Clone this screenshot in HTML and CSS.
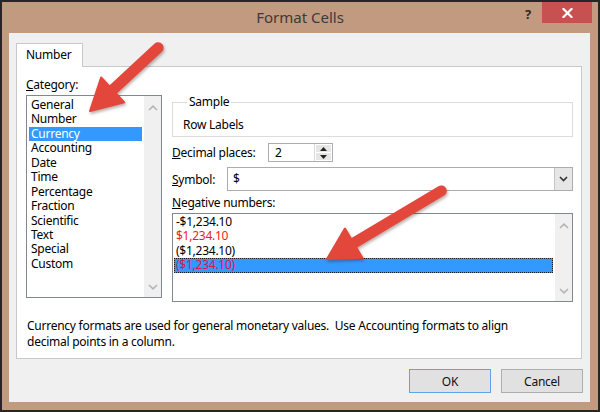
FILE: index.html
```html
<!DOCTYPE html>
<html>
<head>
<meta charset="utf-8">
<title>Format Cells</title>
<link rel="stylesheet" href="styles.css">
</head>
<body>
<div class="window">
  <div class="titlebar">
    <div class="tb-side"></div>
    <div class="title">Format Cells</div>
    <div class="tb-side tb-right">
      <div class="help">?</div>
      <div class="close">
        <svg width="11" height="10" viewBox="0 0 11 10"><path d="M1.5 1 L9.5 9 M9.5 1 L1.5 9" stroke="#fff" stroke-width="2.2" stroke-linecap="square"/></svg>
      </div>
    </div>
  </div>
  <div class="client">
    <div class="tabs"><div class="tab">Number</div></div>
    <div class="panel">
      <div class="cols">
        <div class="left">
          <div class="lbl"><u>C</u>ategory:</div>
          <div class="listbox catlist">
            <ul class="items">
              <li>General</li>
              <li>Number</li>
              <li class="sel">Currency</li>
              <li>Accounting</li>
              <li>Date</li>
              <li>Time</li>
              <li>Percentage</li>
              <li>Fraction</li>
              <li>Scientific</li>
              <li>Text</li>
              <li>Special</li>
              <li>Custom</li>
            </ul>
            <div class="vscroll">
              <svg width="10" height="6" viewBox="0 0 10 6"><path d="M1 5 L5 1.2 L9 5" fill="none" stroke="#b4b4b4" stroke-width="1.6"/></svg>
              <svg width="10" height="6" viewBox="0 0 10 6"><path d="M1 1 L5 4.8 L9 1" fill="none" stroke="#b4b4b4" stroke-width="1.6"/></svg>
            </div>
          </div>
        </div>
        <div class="right">
          <fieldset class="sample">
            <legend>Sample</legend>
            <div class="sample-val">Row Labels</div>
          </fieldset>
          <div class="row dec-row">
            <div class="row-lbl dec-lbl"><u>D</u>ecimal places:</div>
            <div class="spin">
              <div class="spin-val">2</div>
              <div class="spin-btns">
                <div class="spin-btn"><svg width="7" height="4" viewBox="0 0 7 4"><path d="M0 4 L3.5 0 L7 4 Z" fill="#222"/></svg></div>
                <div class="spin-btn"><svg width="7" height="4" viewBox="0 0 7 4"><path d="M0 0 L3.5 4 L7 0 Z" fill="#222"/></svg></div>
              </div>
            </div>
          </div>
          <div class="row sym-row">
            <div class="row-lbl sym-lbl"><u>S</u>ymbol:</div>
            <div class="select">
              <div class="select-val">$</div>
              <div class="select-btn"><svg width="9" height="6" viewBox="0 0 9 6"><path d="M1 1 L4.5 4.6 L8 1" fill="none" stroke="#333" stroke-width="1.6"/></svg></div>
            </div>
          </div>
          <div class="lbl neg-lbl"><u>N</u>egative numbers:</div>
          <div class="listbox neglist">
            <ul class="items neg-items">
              <li>-$1,234.10</li>
              <li class="red">$1,234.10</li>
              <li>($1,234.10)</li>
              <li class="red sel focus">($1,234.10)</li>
            </ul>
            <div class="vscroll">
              <svg width="10" height="6" viewBox="0 0 10 6"><path d="M1 5 L5 1.2 L9 5" fill="none" stroke="#b4b4b4" stroke-width="1.6"/></svg>
              <svg width="10" height="6" viewBox="0 0 10 6"><path d="M1 1 L5 4.8 L9 1" fill="none" stroke="#b4b4b4" stroke-width="1.6"/></svg>
            </div>
          </div>
        </div>
      </div>
      <p class="desc">Currency formats are used for general monetary values.&nbsp; Use Accounting formats to align<br>decimal points in a column.</p>
    </div>
    <div class="buttons">
      <button class="btn ok">OK</button>
      <button class="btn">Cancel</button>
    </div>
  </div>
  <svg class="arrows" width="600" height="412" viewBox="0 0 600 412">
    <g transform="translate(90,111) rotate(137.1)">
      <line x1="-26" y1="0" x2="-93" y2="0" stroke="#e3473b" stroke-width="11" stroke-linecap="round"/>
      <path d="M0 0 L-31 -17 L-31 17 Z" fill="#e3473b" stroke="#e3473b" stroke-width="2" stroke-linejoin="round"/>
    </g>
    <g transform="translate(327,259) rotate(149.2)">
      <line x1="-26" y1="0" x2="-133" y2="0" stroke="#e3473b" stroke-width="11" stroke-linecap="round"/>
      <path d="M0 0 L-31 -17 L-31 17 Z" fill="#e3473b" stroke="#e3473b" stroke-width="2" stroke-linejoin="round"/>
    </g>
  </svg>
</div>
</body>
</html>
```

FILE: styles.css
```css
* { box-sizing: border-box; }

body {
  margin: 0;
  font-family: "Noto Sans", "Open Sans", sans-serif;
  font-size: 12px;
  letter-spacing: -0.25px;
  color: #000;
}

.window {
  position: relative;
  width: 600px;
  height: 412px;
  background: #c29a7f;
  border: 2px solid #262626;
  display: flex;
  flex-direction: column;
}

.titlebar {
  height: 31px;
  display: flex;
  flex-shrink: 0;
}

.tb-side {
  flex: 1;
  display: flex;
}

.tb-right {
  justify-content: flex-end;
  align-items: flex-start;
}

.title {
  font-size: 15px;
  letter-spacing: 0;
  color: #3b3b3b;
  line-height: 31px;
}

.help {
  font-weight: bold;
  font-size: 13px;
  color: #2b2b2b;
  line-height: 16px;
  margin-top: 4px;
  margin-right: 11px;
}

.close {
  width: 50px;
  height: 21px;
  background: #c75050;
  margin-right: 6px;
  display: flex;
  align-items: center;
  justify-content: center;
}

.client {
  flex: 1;
  margin: 0 8px 8px 7px;
  background: #f0f0f0;
  display: flex;
  flex-direction: column;
}

.tabs {
  padding: 10px 0 0 7px;
  display: flex;
}

.tab {
  position: relative;
  z-index: 1;
  height: 24px;
  width: 67px;
  border: 1px solid #c9c9c9;
  border-bottom: none;
  background: #fff;
  padding-left: 9px;
  line-height: 22px;
  margin-bottom: -1px;
}

.panel {
  height: 293px;
  margin: 0 8px 0 7px;
  border: 1px solid #c9c9c9;
  background: #fff;
  padding: 10px 8px 0 9px;
}

.cols {
  display: flex;
  gap: 10px;
}

.left {
  width: 136px;
  display: flex;
  flex-direction: column;
}

.right {
  flex: 1;
  display: flex;
  flex-direction: column;
}

.lbl {
  line-height: 16px;
}

.listbox {
  border: 1px solid #828790;
  display: flex;
  background: #fff;
}

.catlist {
  margin-top: 2px;
  height: 203px;
}

.items {
  flex: 1;
  list-style: none;
  margin: 0;
  padding: 2px 2px 0 2px;
}

.items li {
  line-height: 14.45px;
  height: 14.45px;
  padding-left: 2px;
  white-space: nowrap;
}

.items li.sel {
  background: #3399ff;
  color: #fff;
}

.neg-items {
  padding: 1px 2px 0 1px;
}

.neg-items li {
  padding-left: 2px;
}

.items li.red {
  color: #ee1c24;
}

.items li.sel.red {
  color: #d9184f;
}

.items li.focus {
  outline: 1px dotted #1a1a1a;
  outline-offset: -1px;
}

.vscroll {
  width: 17px;
  background: #f0f0f0;
  display: flex;
  flex-direction: column;
  justify-content: space-between;
  align-items: center;
  padding: 9px 0 7px;
}

.sample {
  margin: 17px 0 0;
  border: 1px solid #dcdcdc;
  padding: 7px 10px 3px;
  min-width: 0;
}

.sample legend {
  padding: 0 2px;
  margin-left: 4px;
  line-height: 16px;
}

.sample-val {
  line-height: 16px;
}

.row {
  display: flex;
  align-items: center;
}

.dec-row {
  margin-top: 6px;
}

.dec-lbl {
  width: 96px;
}

.spin {
  width: 65px;
  height: 19px;
  border: 1px solid #abadb3;
  display: flex;
  background: #fff;
}

.spin-val {
  flex: 1;
  padding-left: 6px;
  line-height: 17px;
}

.spin-btns {
  width: 18px;
  display: flex;
  flex-direction: column;
  gap: 1px;
  padding: 1px;
  background: #fff;
  border-left: 1px solid #dadada;
}

.spin-btn {
  flex: 1;
  background: #e6e6e6;
  display: flex;
  align-items: center;
  justify-content: center;
}

.sym-row {
  margin-top: 5px;
}

.sym-lbl {
  width: 55px;
}

.select {
  flex: 1;
  height: 24px;
  border: 1px solid #acacac;
  display: flex;
  background: #fff;
}

.select-val {
  flex: 1;
  padding-left: 5px;
  line-height: 22px;
}

.select-btn {
  width: 18px;
  background: #e6e6e6;
  border-left: 1px solid #c4c4c4;
  display: flex;
  align-items: center;
  justify-content: center;
}

.neg-lbl {
  margin-top: 4px;
}

.neglist {
  margin-top: 2px;
  height: 89px;
}

.desc {
  margin: 16px 0 0 1px;
  line-height: 16px;
}

.buttons {
  display: flex;
  justify-content: flex-end;
  gap: 10px;
  padding: 10px 7px 0 0;
}

.btn {
  width: 82px;
  height: 24px;
  font: inherit;
  letter-spacing: inherit;
  color: #111;
  background: #e1e1e1;
  border: 1px solid #adadad;
  padding: 0;
}

.btn.ok {
  border-color: #5fa4e8;
}

.arrows {
  position: absolute;
  left: -2px;
  top: -2px;
  pointer-events: none;
  filter: drop-shadow(1px 2px 1.5px rgba(60, 20, 10, 0.35));
}
```
